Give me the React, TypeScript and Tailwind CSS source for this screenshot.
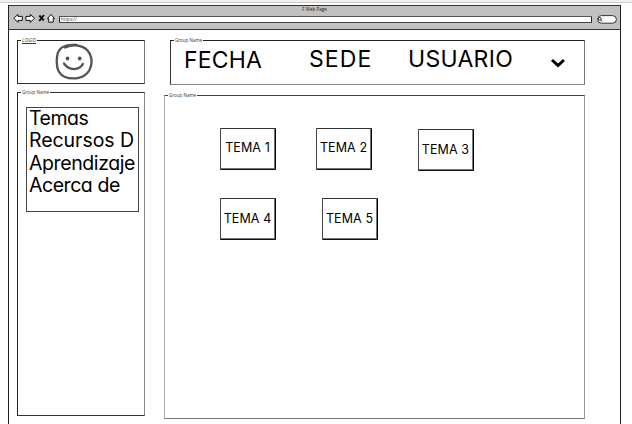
import type { ReactNode } from "react";

const hand = "font-['Inter','Noto_Sans',sans-serif] [font-feature-settings:'cv11'] whitespace-nowrap";

function Group({ label, className, labelClass = "", children }: { label: string; className: string; labelClass?: string; children?: ReactNode }) {
  return (
    <section className={`relative border ${className}`}>
      <span className={`absolute left-[3px] -top-[4px] h-[6px] bg-white px-px font-['Open_Sans',sans-serif] text-[4.5px] leading-[6px] whitespace-nowrap text-[#333] ${labelClass}`}>
        {label}
      </span>
      {children}
    </section>
  );
}

function Tema({ n, className }: { n: number; className: string }) {
  return (
    <button className={`${hand} h-[42px] w-[56px] shrink-0 rounded-[1px] border border-t-[#333] border-r-black border-b-[#111] border-l-[#444] pr-px text-[12.5px] leading-none tracking-[0.1px] text-black shadow-[inset_-1px_-1px_0_#777] ${className}`}>
      TEMA {n}
    </button>
  );
}

function BrowserBar() {
  return (
    <header className="flex h-[25px] flex-col border-y border-t-[#333] border-b-[#333] bg-[#c1c1c1]">
      <div className="h-[8px] text-center font-['Open_Sans',sans-serif] text-[4.6px] leading-[7px] text-[#222]">F Web Page</div>
      <div className="flex h-[10px] items-center">
        <svg className="-mt-[3px] ml-[3px] h-[12px] w-[46px] shrink-0" viewBox="12 11 46 12" fill="#fff" stroke="#111" strokeWidth="1" strokeLinejoin="round">
          <path d="M13.8 17.2 18 13.4v2h4.3v4H18v2z" />
          <path d="M34.6 17.2 30.2 13.4v2h-4.3v4h4.3v2z" />
          <path d="M39.3 14.5 43.7 19.5M44 14 39.2 20" strokeWidth="1.9" fill="none" />
          <path d="M47.4 17.6 51 13.4l3.4 4.2h-1.2v3.6h-4.5v-3.6z" />
        </svg>
        <div className="ml-[1px] h-[7px] w-[533px] shrink-0 rounded-[1px] border border-t-[#555] border-r-[#222] border-b-[#444] border-l-[#222] bg-white pl-px font-['Open_Sans',sans-serif] text-[4.6px] leading-[5px] text-[#444]">https://</div>
        <svg className="ml-[5px] h-[9px] w-[20px] shrink-0" viewBox="0 0 20 9" fill="#fff" stroke="#333">
          <rect x=".6" y=".6" width="18.8" height="7.6" rx="3.8" />
          <circle cx="2.8" cy="4" r="1.4" />
          <path d="m3.8 5 1.3 1.5" />
        </svg>
      </div>
    </header>
  );
}

export default function App() {
  return (
    <div className="h-[424px] w-[632px] overflow-hidden bg-white text-black">
      <div className="h-[3px] border-b border-[#ccc] bg-[#f0f0f0]" />
      <main className="mt-[2px] ml-[8px] h-[419px] w-[613px] border-x border-[#222]">
        <BrowserBar />
        <div className="flex pl-[8px]">
          <aside className="mt-[10px] w-[128px]">
            <Group label="LOGO" labelClass="italic underline tracking-[0.3px] !text-[5px]" className="h-[44px] border-t-[#222] border-r-[#777] border-b-[#333] border-l-[#222]">
              <svg className="mt-[2px] ml-[36px] h-[37px] w-[40px]" viewBox="0 0 40 37" fill="none" stroke="#555" strokeWidth="2.3" strokeLinecap="round">
                <path d="M22 2.1C11 .9 4.200 5 3.200 13 1.8 23 3 31 11 34 19 37 31 35.500 35.500 27 40 18 36.800 8 29 4.100 24 1.800 17 2 11 4.500M21 1.700l3 1" />
                <path d="M10 20.500c5 7.300 15 7.300 19 .4" />
                <path d="M13.500 15.300v.2M25.700 15.300v.2" strokeWidth="3.800" />
              </svg>
            </Group>
            <Group label="Group Name" className="mt-[8px] h-[324px] border-t-[#333] border-r-[#888] border-b-[#333] border-l-[#222]">
              <ul className={`${hand} mt-[14px] ml-[8px] h-[105px] w-[113px] border border-[#444] pl-[2px] text-[19.5px] leading-[22.3px]`}>
                <li className="-mt-px tracking-[-0.5px]">Temas</li>
                <li className="tracking-[-0.05px]">Recursos D</li>
                <li className="tracking-[-0.4px]">Aprendizaje</li>
                <li className="tracking-[-0.45px]">Acerca de</li>
              </ul>
            </Group>
          </aside>
          <div className="mt-[10px] ml-[19px] w-[421px]">
            <Group label="Group Name" className="ml-[6px] h-[45px] border-t-[#222] border-r-[#777] border-b-[#888] border-l-[#333]">
              <div className={`${hand} flex pt-[5px] pl-[13px] text-[23px] leading-[28px]`}>
                <span className="w-[125px] tracking-[0.2px]">FECHA</span>
                <span className="-mt-px w-[99px] tracking-[1.1px]">SEDE</span>
                <span className="-mt-px w-[142px] tracking-[0.3px]">USUARIO</span>
                <svg className="mt-[11px] h-[13px] w-[16px]" viewBox="0 0 16 13" fill="none" stroke="#000" strokeWidth="3">
                  <path d="m2 3 6 5.500L14 3" />
                </svg>
              </div>
            </Group>
            <Group label="Group Name" className="mt-[10px] h-[324px] border-t-[#444] border-r-[#999] border-b-[#777] border-l-[#aaa]">
              <div className="flex pt-[32px] pl-[55px]">
                <Tema n={1} className="pb-[2px]" />
                <Tema n={2} className="ml-[40px] pb-[2px]" />
                <Tema n={3} className="mt-[1px] ml-[46px]" />
              </div>
              <div className="mt-[27px] flex pl-[55px]">
                <Tema n={4} className="" />
                <Tema n={5} className="ml-[46px]" />
              </div>
            </Group>
          </div>
        </div>
      </main>
    </div>
  );
}
